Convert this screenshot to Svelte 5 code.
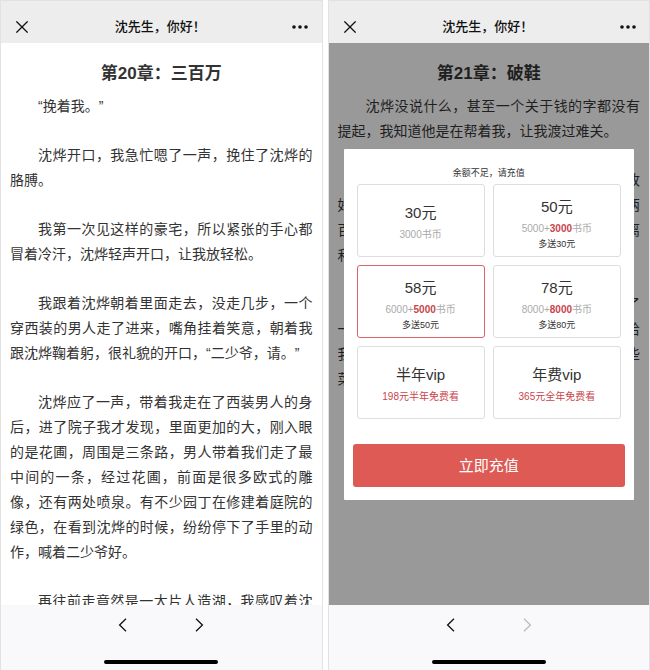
<script>
  const chapter = [
    '“挽着我。”',
    '沈烨开口，我急忙嗯了一声，挽住了沈烨的胳膊。',
    '我第一次见这样的豪宅，所以紧张的手心都冒着冷汗，沈烨轻声开口，让我放轻松。',
    '我跟着沈烨朝着里面走去，没走几步，一个穿西装的男人走了进来，嘴角挂着笑意，朝着我跟沈烨鞠着躬，很礼貌的开口，“二少爷，请。”',
    '沈烨应了一声，带着我走在了西装男人的身后，进了院子我才发现，里面更加的大，刚入眼的是花圃，周围是三条路，男人带着我们走了最中间的一条，经过花圃，前面是很多欧式的雕像，还有两处喷泉。有不少园丁在修建着庭院的绿色，在看到沈烨的时候，纷纷停下了手里的动作，喊着二少爷好。',
    '再往前走竟然是一大片人造湖，我感叹着沈'
  ];

  const covered = [
    [['', '改'], ['好', '两'], ['百', '离'], ['和', '']],
    [['', '了'], ['一', '给'], ['我', '些'], ['菜', '']]
  ];

  const plans = [
    { price: '30元', base: '3000' },
    { price: '50元', base: '5000', bonus: '3000', note: '多送30元' },
    { price: '58元', base: '6000', bonus: '5000', note: '多送50元' },
    { price: '78元', base: '8000', bonus: '8000', note: '多送80元' },
    { price: '半年vip', deal: '198元半年免费看' },
    { price: '年费vip', deal: '365元全年免费看' }
  ];

  let selected = $state(2);
</script>

{#snippet header()}
  <header>
    <button class="icon" aria-label="关闭">
      <svg width="12" height="12" viewBox="0 0 12 12"><path d="M.4.4l11.2 11.2M11.6.4L.4 11.6" /></svg>
    </button>
    <span class="name">沈先生，你好！</span>
    <button class="icon" aria-label="更多">
      <svg class="dots" width="16" height="4" viewBox="0 0 16 4">
        <circle cx="2" cy="2" r="1.8" /><circle cx="8" cy="2" r="1.8" /><circle cx="14" cy="2" r="1.8" />
      </svg>
    </button>
  </header>
{/snippet}

{#snippet footer(last)}
  <footer>
    <nav>
      <button class="icon" aria-label="后退">
        <svg width="9" height="14" viewBox="0 0 9 14"><path d="M8 .8L1.6 7 8 13.2" /></svg>
      </button>
      <button class="icon" aria-label="前进" disabled={last}>
        <svg width="9" height="14" viewBox="0 0 9 14"><path d="M1 .8L7.4 7 1 13.2" /></svg>
      </button>
    </nav>
    <div class="home"></div>
  </footer>
{/snippet}

<main>
  <section class="phone">
    {@render header()}
    <article>
      <h1>第20章：三百万</h1>
      {#each chapter as text, i}
        <p class:cut={i === chapter.length - 1}>{text}</p>
      {/each}
    </article>
    {@render footer(false)}
  </section>

  <section class="phone">
    {@render header()}
    <article class="dim">
      <h1>第21章：破鞋</h1>
      <p>沈烨没说什么，甚至一个关于钱的字都没有提起，我知道他是在帮着我，让我渡过难关。</p>
      {#each covered as rows}
        <div class="para">
          {#each rows as [start, end]}
            <div class="row"><span>{start}</span><span>{end}</span></div>
          {/each}
        </div>
      {/each}
      <div class="dialog" role="dialog" aria-label="余额不足，请充值">
        <div class="tip">余额不足，请充值</div>
        <div class="plans">
          {#each plans as plan, i}
            <button class="plan" class:on={selected === i} onclick={() => (selected = i)}>
              <span class="price">{plan.price}</span>
              {#if plan.deal}
                <span class="deal">{plan.deal}</span>
              {:else}
                <span class="coins">{plan.base}{#if plan.bonus}+<b>{plan.bonus}</b>{/if}书币</span>
              {/if}
              {#if plan.note}<span class="note">{plan.note}</span>{/if}
            </button>
          {/each}
        </div>
        <button class="pay">立即充值</button>
      </div>
    </article>
    {@render footer(true)}
  </section>
</main>

<style>
  :global(body) {
    background: #fff;
  }
  main {
    display: flex;
    gap: 5px;
    height: 100vh;
    box-sizing: border-box;
    font-family: 'Liberation Sans', 'Noto Sans CJK SC', sans-serif;
    color: #333;
    text-spacing-trim: space-all;
  }
  button {
    font: inherit;
    color: inherit;
    border: 0;
    padding: 0;
    background: none;
    cursor: pointer;
  }
  .phone {
    flex: 1;
    min-width: 0;
    display: flex;
    flex-direction: column;
    border: 1px solid #e2e2e3;
    border-bottom: 0;
    box-sizing: border-box;
  }
  header {
    display: flex;
    align-items: center;
    justify-content: space-between;
    height: 42px;
    padding: 10px 13px 0 15px;
    box-sizing: border-box;
    background: #ededed;
    color: #111;
  }
  .icon {
    display: flex;
  }
  svg {
    fill: none;
    stroke: #111;
    stroke-width: 1.3;
  }
  .dots {
    fill: #111;
    stroke: none;
  }
  .name {
    font-size: 13px;
    font-weight: 500;
    line-height: 20px;
  }
  article {
    position: relative;
    flex: 1;
    min-height: 0;
    overflow: hidden;
    padding: 18px 9px 0;
    font-size: 14px;
    line-height: 25px;
  }
  h1 {
    margin: 0 0 8px;
    font-size: 17px;
    line-height: 25px;
    text-align: center;
  }
  p {
    margin: 0 0 24px;
    text-indent: 2em;
    text-align: justify;
  }
  .cut {
    text-align-last: justify;
  }
  .dim {
    background: #999;
    color: #1f1f1f;
  }
  .para {
    margin-bottom: 24px;
  }
  .row {
    display: flex;
    justify-content: space-between;
    height: 25px;
  }
  .dialog {
    position: absolute;
    top: 106px;
    left: 15px;
    right: 15px;
    padding: 16px 9px 13px;
    background: #fff;
    border-radius: 1px;
    color: #333;
  }
  .tip {
    font-size: 9px;
    line-height: 16px;
    text-align: center;
  }
  .plans {
    display: grid;
    grid-template-columns: 1fr 1fr;
    gap: 8px;
    padding: 3px 4px 0;
  }
  .plan {
    display: flex;
    flex-direction: column;
    align-items: center;
    justify-content: center;
    height: 73px;
    padding-top: 2px;
    border: 1px solid #ddd;
    border-radius: 3px;
  }
  .plan.on {
    border-color: #d9636b;
  }
  .price {
    font-size: 15px;
    line-height: 26px;
  }
  .coins {
    font-size: 10px;
    line-height: 18px;
    color: #aaa;
  }
  b {
    color: #c9444b;
  }
  .deal {
    font-size: 10px;
    line-height: 18px;
    color: #c9444b;
  }
  .note {
    font-size: 9px;
    line-height: 12px;
  }
  .pay {
    width: 100%;
    height: 43px;
    margin-top: 25px;
    border-radius: 3px;
    background: #dd5a55;
    color: #fff;
    font-size: 15px;
  }
  footer {
    display: flex;
    flex-direction: column;
    align-items: center;
    justify-content: space-between;
    height: 65px;
    padding: 13px 0 6px;
    box-sizing: border-box;
    background: #f9f9fb;
  }
  nav {
    display: flex;
    gap: 68px;
  }
  .icon:disabled svg {
    stroke: #bbb;
  }
  .home {
    width: 114px;
    height: 4px;
    border-radius: 2px;
    background: #000;
  }
</style>
